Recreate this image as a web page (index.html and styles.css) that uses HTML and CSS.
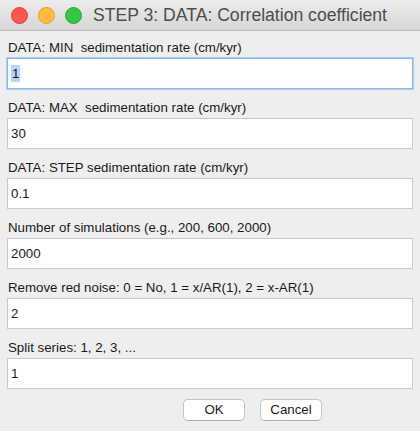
FILE: index.html
```html
<!DOCTYPE html>
<html>
<head>
<meta charset="utf-8">
<link rel="stylesheet" href="styles.css">
</head>
<body>
<div class="window">
  <div class="titlebar">
    <div class="lights">
      <span class="light red"></span>
      <span class="light yellow"></span>
      <span class="light green"></span>
    </div>
    <div class="title">STEP 3: DATA: Correlation coefficient</div>
  </div>
  <div class="content">
    <div class="field">
      <div class="label">DATA: MIN&nbsp; sedimentation rate (cm/kyr)</div>
      <div class="input focused"><span class="sel">1</span></div>
    </div>
    <div class="field">
      <div class="label">DATA: MAX&nbsp; sedimentation rate (cm/kyr)</div>
      <div class="input">30</div>
    </div>
    <div class="field">
      <div class="label">DATA: STEP sedimentation rate (cm/kyr)</div>
      <div class="input">0.1</div>
    </div>
    <div class="field">
      <div class="label">Number of simulations (e.g., 200, 600, 2000)</div>
      <div class="input">2000</div>
    </div>
    <div class="field">
      <div class="label">Remove red noise: 0 = No, 1 = x/AR(1), 2 = x-AR(1)</div>
      <div class="input">2</div>
    </div>
    <div class="field">
      <div class="label">Split series: 1, 2, 3, ...</div>
      <div class="input">1</div>
    </div>
    <div class="buttons">
      <div class="btn">OK</div>
      <div class="btn">Cancel</div>
    </div>
  </div>
</div>
</body>
</html>
```
FILE: styles.css
```css
html, body {
  margin: 0;
  padding: 0;
  background: #ededed;
}
.window {
  width: 420px;
  height: 431px;
  background: #eeeeee;
  font-family: "Liberation Sans", Arial, sans-serif;
  color: #1a1a1a;
  overflow: hidden;
}
.titlebar {
  height: 31px;
  box-sizing: border-box;
  background: linear-gradient(#ececec, #d6d6d6);
  border-bottom: 1px solid #b9b9b9;
  display: flex;
  align-items: center;
}
.lights {
  display: flex;
  gap: 10px;
  padding-left: 11px;
}
.light {
  width: 17px;
  height: 17px;
  border-radius: 50%;
  display: block;
  box-sizing: border-box;
}
.red { background: #fc5753; border: 0.5px solid #df3d39; }
.yellow { background: #fdbc40; border: 0.5px solid #de9e2c; }
.green { background: #33c748; border: 0.5px solid #27aa35; }
.title {
  margin-left: 11px;
  font-size: 17.6px;
  color: #4d4d4d;
}
.content {
  padding: 9px 7px 0 7px;
  display: flex;
  flex-direction: column;
  gap: 11px;
}
.field {
  display: flex;
  flex-direction: column;
  gap: 2px;
}
.label {
  font-size: 13.3px;
  line-height: 16px;
  padding-left: 1px;
}
.input {
  height: 31px;
  box-sizing: border-box;
  background: #ffffff;
  border: 1px solid #c9c9c9;
  font-size: 13.3px;
  line-height: 16px;
  padding: 7px 0 0 3px;
}
.input.focused {
  border: 1px solid #8bb8f0;
  box-shadow: 0 0 0 1px #a9cbf5;
}
.sel {
  background: #b3d7ff;
  padding: 1px 1px;
}
.buttons {
  display: flex;
  justify-content: center;
  gap: 15px;
  margin-top: -1px;
  padding-left: 85px;
}
.btn {
  width: 62px;
  height: 22px;
  box-sizing: border-box;
  background: #ffffff;
  border: 1px solid #c4c4c4;
  border-bottom-color: #aeaeae;
  border-radius: 5px;
  font-size: 13.3px;
  line-height: 20px;
  text-align: center;
}
```
